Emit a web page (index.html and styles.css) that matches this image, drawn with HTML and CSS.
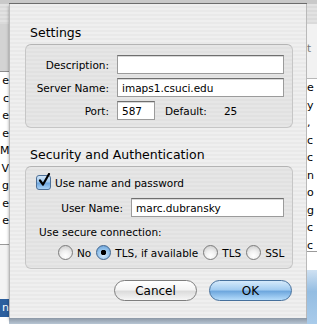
FILE: index.html
```html
<!DOCTYPE html>
<html lang="en">
<head>
    <meta charset="UTF-8">
    <title>Account Settings</title>
    <link rel="stylesheet" href="styles.css">
</head>
<body>

<div class="desktop">
    <!-- window behind the sheet, left edge -->
    <div class="side side-left">
        <div class="side-top"></div>
        <div class="side-tool"></div>
        <div class="side-head"></div>
        <div class="side-list">
            <div class="side-row">e</div>
            <div class="side-row">c</div>
            <div class="side-row">e</div>
            <div class="side-row">e</div>
            <div class="side-row">M</div>
            <div class="side-row">V</div>
            <div class="side-row">g</div>
            <div class="side-row">e</div>
            <div class="side-row">e</div>
        </div>
        <div class="side-blank"></div>
        <div class="side-sel">n</div>
    </div>

    <div class="middle">
        <div class="top-bar"></div>

        <!-- the sheet -->
        <div class="sheet">
            <h3 class="group-title">Settings</h3>
            <div class="group group-settings">
                <div class="field">
                    <label class="label">Description:</label>
                    <div class="input input-wide"></div>
                </div>
                <div class="field">
                    <label class="label">Server Name:</label>
                    <div class="input input-wide">imaps1.csuci.edu</div>
                </div>
                <div class="field field-port">
                    <label class="label">Port:</label>
                    <div class="input input-port">587</div>
                    <span class="default">Default:</span>
                    <span class="default-value">25</span>
                </div>
            </div>

            <h3 class="group-title group-title-second">Security and Authentication</h3>
            <div class="group group-security">
                <div class="check-row">
                    <span class="checkbox">
                        <svg width="13" height="14" viewBox="0 0 13 14">
                            <path d="M2 7.5 L5 11.5 L11 1" fill="none" stroke="#000" stroke-width="2.2" stroke-linecap="round" stroke-linejoin="round"/>
                        </svg>
                    </span>
                    <span>Use name and password</span>
                </div>
                <div class="field field-user">
                    <label class="label label-user">User Name:</label>
                    <div class="input input-user">marc.dubransky</div>
                </div>
                <div class="secure-label">Use secure connection:</div>
                <div class="radio-row">
                    <span class="radio"></span><span class="radio-text">No</span>
                    <span class="radio radio-on"></span><span class="radio-text">TLS, if available</span>
                    <span class="radio"></span><span class="radio-text">TLS</span>
                    <span class="radio"></span><span class="radio-text">SSL</span>
                </div>
            </div>

            <div class="buttons">
                <button class="btn btn-cancel">Cancel</button>
                <button class="btn btn-ok">OK</button>
            </div>
        </div>

        <div class="bottom-bar"></div>
    </div>

    <!-- window behind the sheet, right edge -->
    <div class="side side-right">
        <div class="side-top"></div>
        <div class="side-tool"></div>
        <div class="side-head side-head-right">t</div>
        <div class="side-list">
            <div class="side-row">e</div>
            <div class="side-row">y</div>
            <div class="side-row">,</div>
            <div class="side-row">c</div>
            <div class="side-row">c</div>
            <div class="side-row">n</div>
            <div class="side-row">o</div>
            <div class="side-row">g</div>
            <div class="side-row">c</div>
            <div class="side-row">c</div>
        </div>
        <div class="side-blue"></div>
    </div>
</div>

</body>
</html>
```
FILE: styles.css
```css
html, body {
    margin: 0;
    padding: 0;
}
body {
    font-family: "DejaVu Sans", "Liberation Sans", sans-serif;
    font-size: 10.5px;
    color: #000;
    background: #d6d6d6;
}
.desktop {
    display: flex;
    width: 317px;
    height: 324px;
    overflow: hidden;
}

/* window behind */
.side {
    display: flex;
    flex-direction: column;
    background: #fff;
    overflow: hidden;
}
.side-left {
    width: 9px;
}
.side-right {
    width: 10px;
}
.side-top {
    height: 4px;
    background: #c9c9c9;
}
.side-tool {
    height: 20px;
    background: repeating-linear-gradient(to bottom, #e2e2e2 0 2px, #dadada 2px 4px);
}
.side-head {
    height: 48px;
    background: #d3d3d3;
    border-bottom: 1px solid #8e8e8e;
    box-sizing: border-box;
}
.side-head-right {
    height: 36px;
    padding-top: 18px;
    box-sizing: content-box;
    background: #f2f2f2;
    border-bottom: 1px solid #b8b8b8;
    color: #777;
}
.side-list {
    height: 172px;
    border-bottom: 1px solid #9a9a9a;
}
.side-row {
    height: 17.5px;
    line-height: 17px;
    white-space: nowrap;
    font-size: 11px;
}
.side-left .side-row {
    text-align: right;
}
.side-blank {
    height: 54px;
    background: #f4f4f4;
}
.side-sel {
    height: 18px;
    background: #2c5f9e;
    color: #fff;
    text-align: right;
    line-height: 18px;
    font-size: 11px;
}
.side-blue {
    flex: 1;
    margin-top: 18px;
    background: linear-gradient(to bottom, #cfe1f2, #94bde2 40%, #a9cbea);
}

/* middle column */
.middle {
    width: 298px;
    display: flex;
    flex-direction: column;
}
.top-bar {
    height: 4px;
    background: #c9c9c9;
    border-bottom: 1px solid #6e6e6e;
    box-sizing: border-box;
}
.bottom-bar {
    flex: 1;
    background: linear-gradient(to bottom, #8c98a6, #b8c6d4);
}

/* sheet */
.sheet {
    height: 314px;
    box-sizing: border-box;
    padding: 20px 14px 0 15px;
    background: repeating-linear-gradient(to bottom, #efefef 0 2px, #e9e9e9 2px 4px);
    border-left: 1px solid #b9b9b9;
    border-right: 1px solid #b9b9b9;
    box-shadow: 0 2px 3px rgba(0, 0, 0, 0.35);
    display: flex;
    flex-direction: column;
}
.group-title {
    margin: 0 0 3px 5px;
    font-size: 12.5px;
    font-weight: normal;
    line-height: 17px;
}
.group-title-second {
    margin-top: 18px;
}
.group {
    width: 268px;
    box-sizing: border-box;
    border: 1px solid #c6c6c6;
    border-top-color: #b4b4b4;
    border-radius: 6px;
    background: repeating-linear-gradient(to bottom, #e6e6e6 0 2px, #e1e1e1 2px 4px);
}
.group-settings {
    height: 84px;
    padding-top: 10px;
}
.group-security {
    height: 103px;
    padding-top: 7px;
}

.field {
    display: flex;
    align-items: center;
    height: 19px;
    margin-bottom: 4px;
}
.field-port {
    margin-top: 3px;
}
.label {
    width: 83px;
    text-align: right;
    margin-right: 8px;
    white-space: nowrap;
}
.input {
    height: 19px;
    box-sizing: border-box;
    background: #fff;
    border: 1px solid #9b9b9b;
    border-top-color: #6f6f6f;
    box-shadow: inset 0 1px 0 #d8d8d8;
    padding: 1px 4px 0;
    line-height: 16px;
    font-size: 10.5px;
    white-space: nowrap;
}
.input-wide {
    width: 167px;
}
.input-port {
    width: 38px;
}
.default {
    margin-left: 10px;
}
.default-value {
    margin-left: 17px;
}

.check-row {
    display: flex;
    align-items: center;
    height: 17px;
    padding-left: 10px;
    gap: 4px;
}
.checkbox {
    width: 15px;
    height: 15px;
    box-sizing: border-box;
    border: 1px solid #4d6f96;
    border-radius: 3px;
    background: linear-gradient(to bottom, #d2e6f8 0%, #9dc5ec 45%, #6ea6de 55%, #a9d1f5 100%);
    position: relative;
}
.checkbox svg {
    position: absolute;
    left: 1px;
    top: -3px;
}
.field-user {
    margin-top: 7px;
}
.label-user {
    width: 97px;
}
.input-user {
    width: 153px;
}
.secure-label {
    margin: 8px 0 0 13px;
    line-height: 15px;
}
.radio-row {
    display: flex;
    align-items: center;
    height: 17px;
    margin: 4px 0 0 32px;
    white-space: nowrap;
}
.radio {
    flex: none;
    width: 15px;
    height: 15px;
    box-sizing: border-box;
    border-radius: 50%;
    border: 1px solid #7c7c7c;
    background: radial-gradient(circle at 50% 75%, #fff 0%, #f1f1f1 40%, #c6c6c6 100%);
    margin-right: 4px;
}
.radio-on {
    border-color: #41668f;
    background: radial-gradient(circle at 50% 50%, #000 0 2.5px, transparent 3px),
                radial-gradient(circle at 50% 70%, #d8ecfc 0%, #90c0ea 55%, #5d95d0 100%);
}
.radio-text {
    margin-right: 5px;
}

.buttons {
    display: flex;
    justify-content: flex-end;
    gap: 12px;
    margin-top: 11px;
}
.btn {
    width: 83px;
    height: 21px;
    border-radius: 11px;
    font-family: inherit;
    font-size: 12px;
    padding: 0;
    cursor: pointer;
}
.btn-cancel {
    border: 1px solid #7e7e7e;
    background: linear-gradient(to bottom, #ffffff 0%, #f4f4f4 45%, #dcdcdc 55%, #f6f6f6 100%);
}
.btn-ok {
    border: 1px solid #46709c;
    background: linear-gradient(to bottom, #d5eafb 0%, #a4cdf1 45%, #6fa8de 55%, #b5dcfb 100%);
}
```
